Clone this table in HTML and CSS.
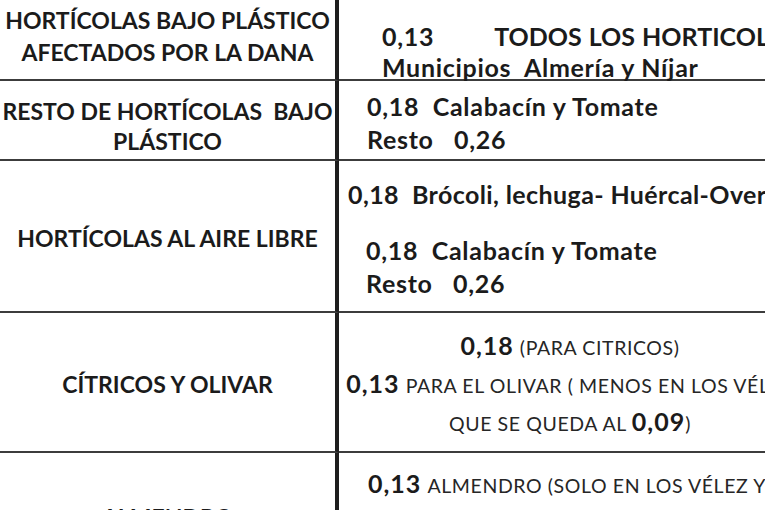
FILE: index.html
```html
<!DOCTYPE html>
<html lang="es">
<head>
<meta charset="utf-8">
<title>Tabla de índices</title>
<link rel="stylesheet" href="styles.css">
</head>
<body>
<div class="sheet">
  <div class="cell left r1">HORTÍCOLAS BAJO PLÁSTICO<br>AFECTADOS POR LA DANA</div>
  <div class="cell right r1">
    <div>0,13<span class="gap">TODOS LOS HORTICOLAS</span></div>
    <div>Municipios&nbsp; Almería y Níjar</div>
  </div>

  <div class="cell left r2">RESTO DE HORTÍCOLAS&nbsp; BAJO<br>PLÁSTICO</div>
  <div class="cell right r2">
    <div>0,18&nbsp; Calabacín y Tomate</div>
    <div>Resto&nbsp;&nbsp; 0,26</div>
  </div>

  <div class="cell left r3">HORTÍCOLAS AL AIRE LIBRE</div>
  <div class="cell right r3">
    <div class="first">0,18&nbsp; Brócoli, lechuga- Huércal-Overa</div>
    <div class="sub">0,18&nbsp; Calabacín y Tomate</div>
    <div class="sub">Resto&nbsp;&nbsp; 0,26</div>
  </div>

  <div class="cell left r4">CÍTRICOS Y OLIVAR</div>
  <div class="cell right r4">
    <div><span class="num">0,18</span> <span class="small">(PARA CITRICOS)</span></div>
    <div><span class="num">0,13</span> <span class="small">PARA EL OLIVAR ( MENOS EN LOS VÉLEZ</span></div>
    <div><span class="small">QUE SE QUEDA AL </span><span class="num">0,09</span><span class="small">)</span></div>
  </div>

  <div class="cell left r5">ALMENDRO</div>
  <div class="cell right r5">
    <div><span class="num">0,13</span> <span class="small">ALMENDRO (SOLO EN LOS VÉLEZ Y</span></div>
  </div>
</div>
</body>
</html>
```
FILE: styles.css
```css
html, body {
  margin: 0;
  padding: 0;
  background: #ffffff;
}
body {
  width: 765px;
  height: 510px;
  overflow: hidden;
  font-family: "Lato", "Liberation Sans", sans-serif;
  font-weight: 700;
  color: #1b1b1b;
}
.sheet {
  display: grid;
  grid-template-columns: 339px 462px;
  grid-template-rows: 81px 80px 152px 140px 120px;
  width: 801px;
}
.cell {
  box-sizing: border-box;
  border-bottom: 2px solid #3c3c3c;
  white-space: nowrap;
}
.left {
  border-right: 4px solid #1e1e1e;
  text-align: center;
  font-size: 23px;
  line-height: 30px;
}
.right {
  font-size: 25px;
  letter-spacing: 0.7px;
  line-height: 33px;
}
.left.r1 { padding-top: 4px; line-height: 32px; }
.left.r2 { padding-top: 15px; }
.left.r3 { padding-top: 62px; }
.left.r4 { padding-top: 56px; }
.left.r5 { padding-top: 49px; border-bottom: none; }

.right.r1 { padding: 21px 0 0 43px; line-height: 31px; }
.right.r1 .gap { margin-left: 60px; letter-spacing: 0; word-spacing: 1px; }
.right.r2 { padding: 9px 0 0 28px; }
.right.r3 { padding-top: 17px; }
.right.r3 .first { padding-left: 9px; letter-spacing: 0.4px; }
.right.r3 .sub { padding-left: 27px; }
.right.r3 .first + .sub { margin-top: 23px; }
.right.r4 {
  padding-top: 13px;
  text-align: center;
  line-height: 38px;
  letter-spacing: 0;
}
.right.r5 {
  padding: 11px 0 0 29px;
  line-height: 38px;
  letter-spacing: 0;
  border-bottom: none;
}
.num {
  letter-spacing: 1px;
}
.small {
  font-size: 19.5px;
  font-weight: 400;
  letter-spacing: 0.6px;
  line-height: 1;
  color: #262626;
}
```
